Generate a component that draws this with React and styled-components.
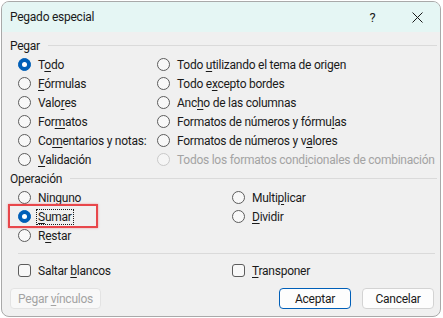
import React from 'react';
import styled, { createGlobalStyle } from 'styled-components';

const GlobalStyle = createGlobalStyle`
  html, body {
    margin: 0;
    padding: 0;
    background: #ffffff;
  }
  body {
    font-family: Roboto, 'Noto Sans', sans-serif;
    font-size: 12px;
    letter-spacing: -0.25px;
    color: #1a1a1a;
  }
`;

const Dialog = styled.div`
  box-sizing: border-box;
  margin: 1px 0 0 1px;
  width: 440px;
  height: 316px;
  border: 1px solid #a9a9a9;
  border-radius: 8px;
  overflow: hidden;
  background: #f0f0f0;
  display: flex;
  flex-direction: column;
`;

const TitleBar = styled.div`
  height: 30px;
  background: #e5f6f4;
  display: flex;
  align-items: center;
  padding-left: 8px;
  font-size: 12px;
  color: #1a1a1a;
`;

const Title = styled.span`
  flex: 1;
`;

const TitleButton = styled.span`
  width: 45px;
  height: 30px;
  display: flex;
  align-items: center;
  justify-content: center;
  font-size: 13px;
  color: #1a1a1a;
`;

const Body = styled.div`
  padding: 4px 3px 0 8px;
  display: flex;
  flex-direction: column;
`;

const GroupHeader = styled.div`
  height: 19px;
  display: flex;
  align-items: center;
  gap: 8px;
  &::after {
    content: '';
    flex: 1;
    height: 1px;
    background: #dadada;
  }
`;

const Grid = styled.div`
  display: grid;
  grid-template-columns: ${(p) => p.$first}px 1fr;
  padding-left: 8px;
`;

const Option = styled.div`
  height: 19px;
  display: flex;
  align-items: center;
  gap: 7px;
  color: ${(p) => (p.$disabled ? '#a3a3a3' : '#1a1a1a')};
  white-space: nowrap;
  position: relative;
`;

const Radio = styled.span`
  box-sizing: border-box;
  width: 13px;
  height: 13px;
  border-radius: 50%;
  flex: none;
  display: flex;
  align-items: center;
  justify-content: center;
  border: 1px solid
    ${(p) => (p.$checked ? '#005fb8' : p.$disabled ? '#c9c9c9' : '#5c5c5c')};
  background: ${(p) => (p.$checked ? '#005fb8' : p.$disabled ? '#f5f5f5' : '#f8f8f8')};
  &::after {
    content: '';
    display: ${(p) => (p.$checked ? 'block' : 'none')};
    width: 5px;
    height: 5px;
    border-radius: 50%;
    background: #ffffff;
  }
`;

const Check = styled.span`
  box-sizing: border-box;
  width: 13px;
  height: 13px;
  border-radius: 3px;
  flex: none;
  border: 1px solid #5c5c5c;
  background: #f8f8f8;
`;

const Focus = styled.span`
  outline: 1px dotted #1a1a1a;
  padding: 0 1px;
  margin-left: -1px;
`;

const Highlight = styled.span`
  box-sizing: border-box;
  position: absolute;
  left: -10px;
  top: -3px;
  width: 90px;
  height: 24px;
  border: 2px solid #e8474b;
  box-shadow: 0 0 2px rgba(232, 71, 75, 0.5);
  pointer-events: none;
`;

const Separator = styled.div`
  height: 1px;
  background: #dadada;
  margin: 8px 2px 7px 8px;
`;

const Footer = styled.div`
  display: flex;
  align-items: center;
  margin-top: 8px;
  padding-right: 3px;
`;

const Button = styled.button`
  box-sizing: border-box;
  height: 21px;
  width: ${(p) => p.$w}px;
  margin-left: ${(p) => p.$ml || 0}px;
  font-family: inherit;
  font-size: 12px;
  letter-spacing: inherit;
  padding: 0;
  border-radius: 4px;
  border: 1px solid ${(p) => (p.$primary ? '#005fb8' : p.$disabled ? '#e3e3e3' : '#d3d3d3')};
  background: ${(p) => (p.$disabled ? '#f8f8f8' : '#fdfdfd')};
  color: ${(p) => (p.$disabled ? '#a3a3a3' : '#1a1a1a')};
`;

const Spacer = styled.div`
  flex: 1;
`;

const U = styled.span`
  text-decoration: underline;
  text-underline-offset: 2px;
`;

const RadioOption = ({ checked, disabled, children }) => (
  <Option $disabled={disabled}>
    <Radio $checked={checked} $disabled={disabled} />
    <span>{children}</span>
  </Option>
);

const CheckOption = ({ children }) => (
  <Option>
    <Check />
    <span>{children}</span>
  </Option>
);

export default function App() {
  return (
    <>
      <GlobalStyle />
      <Dialog>
        <TitleBar>
          <Title>Pegado especial</Title>
          <TitleButton>?</TitleButton>
          <TitleButton>
            <svg width="11" height="11" viewBox="0 0 11 11">
              <path d="M0.5 0.5 L10.5 10.5 M10.5 0.5 L0.5 10.5" stroke="#1a1a1a" strokeWidth="1" />
            </svg>
          </TitleButton>
        </TitleBar>
        <Body>
          <GroupHeader>Pegar</GroupHeader>
          <Grid $first={139}>
            <RadioOption checked>T<U>o</U>do</RadioOption>
            <RadioOption>Todo <U>u</U>tilizando el tema de origen</RadioOption>
            <RadioOption><U>F</U>órmulas</RadioOption>
            <RadioOption>Todo e<U>x</U>cepto bordes</RadioOption>
            <RadioOption>Valo<U>r</U>es</RadioOption>
            <RadioOption>Anc<U>h</U>o de las columnas</RadioOption>
            <RadioOption>For<U>m</U>atos</RadioOption>
            <RadioOption>Formatos de números y fórmu<U>l</U>as</RadioOption>
            <RadioOption>Co<U>m</U>entarios y notas:</RadioOption>
            <RadioOption>Formatos de números y v<U>a</U>lores</RadioOption>
            <RadioOption><U>V</U>alidación</RadioOption>
            <RadioOption disabled>Todos los formatos cond<U>i</U>cionales de combinación</RadioOption>
          </Grid>
          <GroupHeader>Operación</GroupHeader>
          <Grid $first={214}>
            <RadioOption>Ninguno</RadioOption>
            <RadioOption>Multi<U>p</U>licar</RadioOption>
            <Option>
              <Radio $checked />
              <Focus><U>S</U>umar</Focus>
              <Highlight />
            </Option>
            <RadioOption><U>D</U>ividir</RadioOption>
            <RadioOption>R<U>e</U>star</RadioOption>
          </Grid>
          <Separator />
          <Grid $first={214}>
            <CheckOption>Saltar <U>b</U>lancos</CheckOption>
            <CheckOption><U>T</U>ransponer</CheckOption>
          </Grid>
          <Footer>
            <Button $w={91} $disabled>Pegar <U>v</U>ínculos</Button>
            <Spacer />
            <Button $w={72} $primary>Aceptar</Button>
            <Button $w={72} $ml={11}>Cancelar</Button>
          </Footer>
        </Body>
      </Dialog>
    </>
  );
}
